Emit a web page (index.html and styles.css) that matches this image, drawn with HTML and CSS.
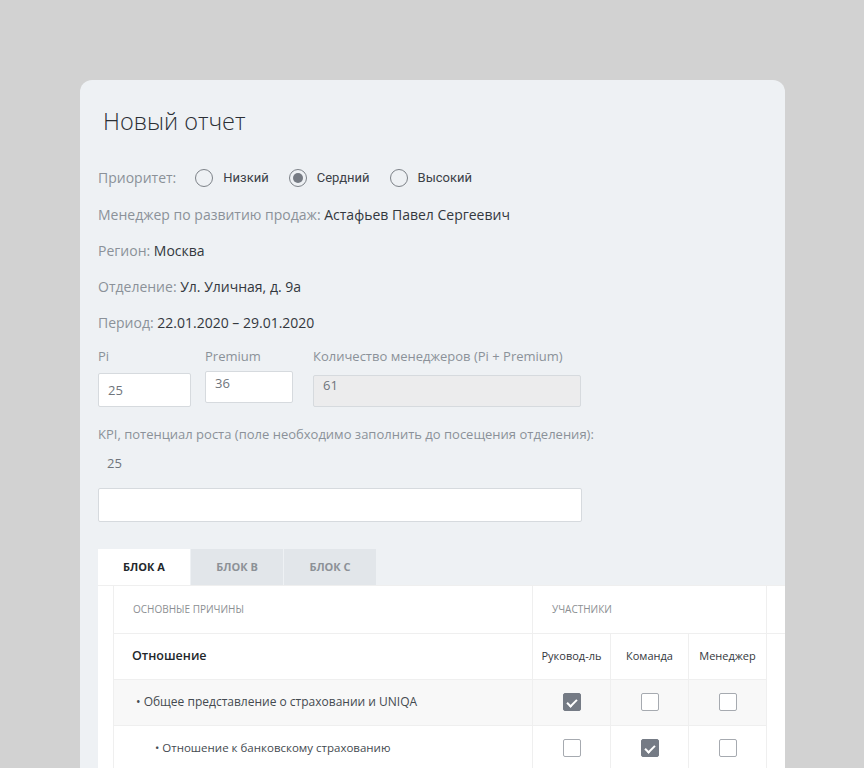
FILE: index.html
```html
<!DOCTYPE html>
<html lang="ru">
<head>
  <meta charset="UTF-8">
  <meta name="viewport" content="width=device-width, initial-scale=1.0">
  <title>Новый отчет</title>
  <link rel="stylesheet" href="styles.css">
</head>
<body>

<div class="report-card">
  <h1 class="report-title">Новый отчет</h1>

  <div class="info-row priority">
    <span class="label">Приоритет:</span>
    <label class="radio"><span class="radio-dot"></span>Низкий</label>
    <label class="radio"><span class="radio-dot checked"></span>Сердний</label>
    <label class="radio"><span class="radio-dot"></span>Высокий</label>
  </div>

  <div class="info-row"><span class="label">Менеджер по развитию продаж:</span> Астафьев Павел Сергеевич</div>
  <div class="info-row"><span class="label">Регион:</span> Москва</div>
  <div class="info-row"><span class="label">Отделение:</span> Ул. Уличная, д. 9а</div>
  <div class="info-row"><span class="label">Период:</span> 22.01.2020 – 29.01.2020</div>

  <div class="fields">
    <div class="field field-pi">
      <div class="field-label">Pi</div>
      <div class="input input-pi">25</div>
    </div>
    <div class="field field-premium">
      <div class="field-label">Premium</div>
      <div class="input input-premium">36</div>
    </div>
    <div class="field field-total">
      <div class="field-label">Количество менеджеров (Pi + Premium)</div>
      <div class="input input-total disabled">61</div>
    </div>
  </div>

  <div class="kpi">
    <div class="field-label">KPI, потенциал роста (поле необходимо заполнить до посещения отделения):</div>
    <div class="kpi-value">25</div>
    <div class="input input-kpi"></div>
  </div>

  <!-- Блоки -->
  <div class="tabs">
    <div class="tab active">БЛОК А</div>
    <div class="tab">БЛОК В</div>
    <div class="tab">БЛОК С</div>
  </div>

  <div class="panel">
    <div class="grid">
      <div class="cell head-cell first">Основные причины</div>
      <div class="cell head-cell span3">Участники</div>
      <div class="cell head-cell extra"></div>

      <div class="cell first group-title">Отношение</div>
      <div class="cell col-title">Руковод-ль</div>
      <div class="cell col-title">Команда</div>
      <div class="cell col-title">Менеджер</div>
      <div class="cell extra"></div>

      <div class="cell first item shaded">• Общее представление о страховании и UNIQA</div>
      <div class="cell check-cell shaded"><span class="check checked"></span></div>
      <div class="cell check-cell shaded"><span class="check"></span></div>
      <div class="cell check-cell shaded"><span class="check"></span></div>
      <div class="cell extra"></div>

      <div class="cell first item sub">• Отношение к банковскому страхованию</div>
      <div class="cell check-cell"><span class="check"></span></div>
      <div class="cell check-cell"><span class="check checked"></span></div>
      <div class="cell check-cell"><span class="check"></span></div>
      <div class="cell extra"></div>
    </div>
  </div>
</div>

</body>
</html>
```

FILE: styles.css
```css
:root {
  --page-bg: #d2d2d2;
  --card-bg: #eef1f4;
  --label: #8b9199;
  --text: #33383e;
  --border: #d6dade;
  --line: #efefef;
  --tab-bg: #e2e6ea;
  --check: #757b85;
}

* {
  margin: 0;
  padding: 0;
  box-sizing: border-box;
}

body {
  font-family: 'Open Sans', 'Liberation Sans', sans-serif;
  background: var(--page-bg);
  color: var(--text);
  height: 768px;
  overflow: hidden;
}

.report-card {
  margin: 80px 0 0 80px;
  width: 705px;
  height: 688px;
  background: var(--card-bg);
  border-radius: 12px 12px 0 0;
  padding: 26px 0 0 18px;
  overflow: hidden;
}

.report-title {
  font-size: 23.5px;
  font-weight: 300;
  line-height: 30px;
  color: #2b2f34;
  padding-left: 5px;
  margin-bottom: 32px;
}

.info-row {
  font-size: 14px;
  line-height: 20px;
  height: 20px;
  margin-bottom: 16px;
  color: var(--text);
}

.label {
  color: var(--label);
}

.priority {
  display: flex;
  align-items: center;
  margin-bottom: 17px;
}

.priority .label {
  margin-right: 19px;
}

.radio {
  display: flex;
  align-items: center;
  font-family: Roboto, 'Liberation Sans', sans-serif;
  font-size: 13px;
  color: #3c4148;
  margin-right: 20px;
}

.radio-dot {
  width: 18px;
  height: 18px;
  border: 1px solid #7d8288;
  border-radius: 50%;
  margin-right: 10px;
  display: flex;
  align-items: center;
  justify-content: center;
}

.radio-dot.checked::after {
  content: '';
  width: 10px;
  height: 10px;
  border-radius: 50%;
  background: #767b83;
}

.fields {
  display: flex;
  margin-top: -3px;
}

.field-label {
  font-size: 13px;
  line-height: 20px;
  color: var(--label);
}

.field-pi { width: 93px; margin-right: 14px; }
.field-premium { width: 88px; margin-right: 20px; }
.field-total { width: 268px; }

.input {
  background: #fff;
  border: 1px solid var(--border);
  border-radius: 2px;
  font-size: 13px;
  color: #6f757c;
  padding-left: 9px;
}

.input-pi {
  height: 34px;
  line-height: 32px;
  margin-top: 7px;
}

.input-premium {
  height: 32px;
  line-height: 22px;
  margin-top: 5px;
}

.input-total {
  height: 32px;
  line-height: 18px;
  margin-top: 9px;
}

.input.disabled {
  background: #ececed;
}

.kpi {
  margin-top: 17px;
}

.kpi-value {
  font-size: 13px;
  line-height: 20px;
  color: #6f757c;
  padding-left: 9px;
  margin-top: 9px;
}

.input-kpi {
  width: 484px;
  height: 34px;
  margin-top: 15px;
}

.tabs {
  display: flex;
  margin-top: 27px;
}

.tab {
  width: 92px;
  height: 36px;
  line-height: 36px;
  text-align: center;
  font-size: 11px;
  font-weight: 700;
  color: #8c9197;
  background: var(--tab-bg);
  margin-right: 1px;
}

.tab.active {
  background: #fff;
  color: #23272b;
}

.panel {
  background: #fff;
  border-top: 1px solid var(--line);
  padding-left: 15px;
  height: 200px;
}

.grid {
  display: grid;
  grid-template-columns: 419px 78px 78px 78px 19px;
  border-left: 1px solid var(--line);
}

.cell {
  height: 46px;
  border-bottom: 1px solid var(--line);
  border-right: 1px solid var(--line);
  display: flex;
  align-items: center;
}

.extra {
  border-right: none;
  border-bottom: none;
}

.head-cell {
  height: 48px;
  padding-bottom: 1px;
  font-size: 10px;
  text-transform: uppercase;
  color: #8c8f93;
}

.head-cell.extra {
  border-bottom: 1px solid var(--line);
}

.head-cell.first {
  padding-left: 19px;
}

.head-cell.span3 {
  grid-column: span 3;
  padding-left: 19px;
}

.group-title {
  padding-left: 18px;
  padding-bottom: 2px;
  font-size: 12.5px;
  font-weight: 600;
  color: #23272b;
}

.col-title {
  justify-content: center;
  padding-bottom: 2px;
  font-size: 11px;
  color: #34383d;
}

.item {
  padding-left: 22px;
  padding-bottom: 2px;
  font-size: 12px;
  color: #444a50;
}

.item.sub {
  padding-left: 41px;
  font-size: 11.5px;
}

.shaded {
  background: #f8f8f8;
}

.check-cell {
  justify-content: center;
  padding-bottom: 2px;
}

.check {
  width: 18px;
  height: 18px;
  border: 1px solid #a6aab0;
  border-radius: 2px;
  background: #fff;
  position: relative;
}

.check.checked {
  background: var(--check);
  border-color: var(--check);
}

.check.checked::after {
  content: '';
  position: absolute;
  left: 5px;
  top: 3px;
  width: 4px;
  height: 8px;
  border-right: 2px solid #fff;
  border-bottom: 2px solid #fff;
  transform: rotate(45deg);
}
```
